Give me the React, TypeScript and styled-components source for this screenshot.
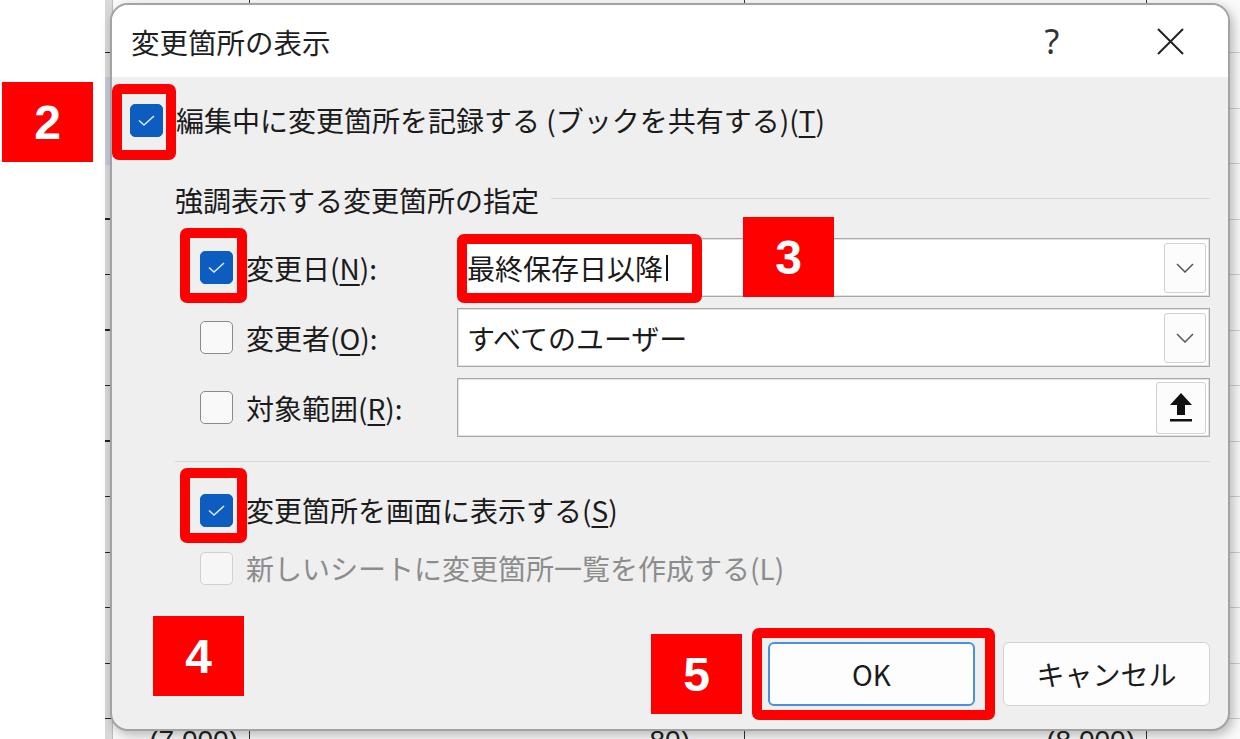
import React from "react";
import styled, { createGlobalStyle } from "styled-components";

const GlobalStyle = createGlobalStyle`
  html, body {
    margin: 0;
    padding: 0;
    background: #fff;
  }
  body {
    font-family: "Noto Sans CJK JP", "Noto Sans", sans-serif;
    color: #1b1b1b;
  }
`;

const Screen = styled.div`
  position: relative;
  width: 1240px;
  height: 739px;
  overflow: hidden;
  display: flex;
  background: #fff;
`;

const Gutter = styled.div`
  width: 105px;
  flex-shrink: 0;
`;

// spreadsheet peeking out behind the dialog
const Sheet = styled.div`
  flex: 1;
  display: flex;
  flex-direction: column;
  justify-content: flex-end;
  background:
    linear-gradient(to right, transparent 144px, #333 144px 145px, transparent 145px 639px,
      #333 639px 640px, transparent 640px 1041px, #333 1041px 1042px, transparent 1042px),
    repeating-linear-gradient(to bottom, transparent 0 54.5px, #cfcfcf 54.5px 55.5px),
    #fafafa;
  background-position: 0 0, 0 -2px, 0 0;
`;

const RowHeader = styled.div`
  position: absolute;
  left: 105px;
  top: 0;
  width: 7px;
  height: 739px;
  background:
    linear-gradient(to bottom, transparent 77px, #c3cad8 77px 165px, transparent 165px),
    repeating-linear-gradient(to bottom, transparent 0 54px, #222 54px 55.5px),
    #d9d9d9;
  background-position: 0 0, 0 -2px, 0 0;
  border-right: 1px solid #bdbdbd;
`;

const CellRow = styled.div`
  display: grid;
  grid-template-columns: 7px 138px 495px 402px 1fr;
  height: 34px;
  margin-bottom: -19px;
  font-family: "Liberation Sans", sans-serif;
  font-size: 28px;
  line-height: 34px;
  color: #222;
`;

const Cell = styled.div<{ $pad?: number }>`
  text-align: right;
  padding-right: ${(p) => p.$pad ?? 12}px;
  overflow: hidden;
  white-space: nowrap;
`;

const Dialog = styled.div`
  position: absolute;
  left: 110px;
  top: 3px;
  width: 1120px;
  height: 728px;
  box-sizing: border-box;
  border: 2px solid #a3a3a3;
  border-radius: 18px;
  background: #efefef;
  overflow: hidden;
  display: flex;
  flex-direction: column;
  box-shadow: 3px 4px 12px rgba(0, 0, 0, 0.28);
`;

const TitleBar = styled.div`
  height: 72px;
  flex-shrink: 0;
  background: #fff;
  display: flex;
  align-items: center;
  padding: 0 18px 0 19px;
`;

const Title = styled.div`
  flex: 1;
  font-size: 28.5px;
  color: #1f1f1f;
`;

const TitleButton = styled.div<{ $w: number }>`
  width: ${(p) => p.$w}px;
  height: 60px;
  display: flex;
  align-items: center;
  justify-content: center;
  font-family: "Noto Sans", sans-serif;
  font-size: 34px;
  color: #333;
`;

const Body = styled.div`
  flex: 1;
  display: flex;
  flex-direction: column;
  padding: 13px 18px 0 18px;
`;

const CheckRow = styled.div<{ $indent?: number; $mt?: number; $h?: number }>`
  display: flex;
  align-items: center;
  gap: 13px;
  height: ${(p) => p.$h ?? 50}px;
  margin-top: ${(p) => p.$mt ?? 0}px;
  padding-left: ${(p) => p.$indent ?? 0}px;
`;

const Label = styled.span<{ $disabled?: boolean }>`
  font-size: 28px;
  white-space: nowrap;
  color: ${(p) => (p.$disabled ? "#8c8c8c" : "#1b1b1b")};
  u {
    text-underline-offset: 4px;
    text-decoration-thickness: 1.5px;
  }
`;

const Box = styled.span<{ $checked?: boolean; $disabled?: boolean }>`
  width: 33px;
  height: 33px;
  flex-shrink: 0;
  box-sizing: border-box;
  border-radius: 5px;
  display: flex;
  align-items: center;
  justify-content: center;
  background: ${(p) => (p.$checked ? "#0c5dbf" : p.$disabled ? "#f6f6f6" : "#f9f9f9")};
  border: 1.5px solid
    ${(p) => (p.$checked ? "#0c5dbf" : p.$disabled ? "#d0d0d0" : "#8a8a8a")};
`;

const GroupHeader = styled.div`
  display: flex;
  align-items: center;
  gap: 12px;
  height: 40px;
  margin-top: 30px;
  padding-left: 45px;
`;

const Rule = styled.div`
  flex: 1;
  height: 1px;
  background: #d7d7d7;
  margin-top: -4px;
`;

const Fields = styled.div`
  display: grid;
  grid-template-columns: 257px 1fr;
  grid-auto-rows: 59px;
  row-gap: 11px;
  margin-top: 18px;
  padding-left: 70px;
`;

const FieldLabel = styled.div`
  display: flex;
  align-items: center;
  gap: 13px;
`;

const Input = styled.div`
  display: flex;
  align-items: center;
  box-sizing: border-box;
  background: #fff;
  border: 1px solid #a8a8a8;
  box-shadow: inset 0 0 0 1px #e2e2e2;
  padding-left: 9px;
  font-size: 28px;
  color: #1b1b1b;
`;

const InputText = styled.span`
  flex: 1;
  display: flex;
  align-items: center;
  white-space: nowrap;
`;

const Caret = styled.span`
  display: inline-block;
  width: 2px;
  height: 26px;
  margin-left: 3px;
  background: #111;
`;

const SideButton = styled.div<{ $w: number; $h: number }>`
  width: ${(p) => p.$w}px;
  height: ${(p) => p.$h}px;
  margin-right: 3px;
  box-sizing: border-box;
  border: 1px solid #d2d2d2;
  border-radius: 3px;
  background: #fcfcfc;
  display: flex;
  align-items: center;
  justify-content: center;
`;

const Separator = styled.div`
  height: 1px;
  background: #d7d7d7;
  margin: 24px 0 0 45px;
`;

const Footer = styled.div`
  display: flex;
  justify-content: flex-end;
  gap: 28px;
  margin-top: 49px;
`;

const Button = styled.div<{ $primary?: boolean }>`
  width: 207px;
  height: 64px;
  box-sizing: border-box;
  border-radius: 6px;
  background: #fdfdfd;
  border: ${(p) => (p.$primary ? "2px solid #4a90da" : "1px solid #d3d3d3")};
  display: flex;
  align-items: center;
  justify-content: center;
  font-size: 28px;
  color: #1b1b1b;
`;

// annotation overlays
const Badge = styled.div<{ $x: number; $y: number }>`
  position: absolute;
  left: ${(p) => p.$x}px;
  top: ${(p) => p.$y}px;
  width: 91px;
  height: 80px;
  background: #ff0000;
  color: #fff;
  display: flex;
  align-items: center;
  justify-content: center;
  font-family: "Liberation Sans", Arial, sans-serif;
  font-weight: 700;
  font-size: 48px;
`;

const Highlight = styled.div<{ $x: number; $y: number; $w: number; $h: number }>`
  position: absolute;
  left: ${(p) => p.$x}px;
  top: ${(p) => p.$y}px;
  width: ${(p) => p.$w}px;
  height: ${(p) => p.$h}px;
  box-sizing: border-box;
  border: 10px solid #ff0000;
  border-radius: 7px;
  pointer-events: none;
`;

const Check = ({ checked, disabled }: { checked?: boolean; disabled?: boolean }) => (
  <Box $checked={checked} $disabled={disabled}>
    {checked && (
      <svg width="19" height="13" viewBox="0 0 19 13">
        <path d="M2 6.5 L7 11 L17 2" fill="none" stroke="#dce8f7" strokeWidth="1.6" />
      </svg>
    )}
  </Box>
);

const Chevron = () => (
  <svg width="18" height="10" viewBox="0 0 18 10">
    <path d="M1 1 L9 9 L17 1" fill="none" stroke="#555" strokeWidth="1.5" />
  </svg>
);

const UploadArrow = () => (
  <svg width="24" height="32" viewBox="0 0 24 32">
    <path d="M12 1 L23 13 L16 13 L16 23 L8 23 L8 13 L1 13 Z" fill="#111" />
    <rect x="1" y="27" width="22" height="2.5" fill="#111" />
  </svg>
);

const App = () => {
  return (
    <>
      <GlobalStyle />
      <Screen>
        <Gutter />
        <Sheet>
          <CellRow>
            <Cell />
            <Cell>(7,000)</Cell>
            <Cell $pad={55}>80)</Cell>
            <Cell>(8,000)</Cell>
            <Cell />
          </CellRow>
        </Sheet>
        <RowHeader />

        <Dialog>
          <TitleBar>
            <Title>変更箇所の表示</Title>
            <TitleButton $w={60}>?</TitleButton>
            <TitleButton $w={48} />
            <TitleButton $w={80}>
              <svg width="27" height="27" viewBox="0 0 27 27">
                <path d="M1 1 L26 26 M26 1 L1 26" stroke="#222" strokeWidth="2" />
              </svg>
            </TitleButton>
          </TitleBar>

          <Body>
            <CheckRow $h={60}>
              <Check checked />
              <Label>
                編集中に変更箇所を記録する (ブックを共有する)(<u>T</u>)
              </Label>
            </CheckRow>

            <GroupHeader>
              <Label>強調表示する変更箇所の指定</Label>
              <Rule />
            </GroupHeader>

            <Fields>
              <FieldLabel>
                <Check checked />
                <Label>
                  変更日(<u>N</u>):
                </Label>
              </FieldLabel>
              <Input>
                <InputText>
                  最終保存日以降
                  <Caret />
                </InputText>
                <SideButton $w={42} $h={50}>
                  <Chevron />
                </SideButton>
              </Input>

              <FieldLabel>
                <Check />
                <Label>
                  変更者(<u>O</u>):
                </Label>
              </FieldLabel>
              <Input>
                <InputText>すべてのユーザー</InputText>
                <SideButton $w={42} $h={50}>
                  <Chevron />
                </SideButton>
              </Input>

              <FieldLabel>
                <Check />
                <Label>
                  対象範囲(<u>R</u>):
                </Label>
              </FieldLabel>
              <Input>
                <InputText />
                <SideButton $w={50} $h={52}>
                  <UploadArrow />
                </SideButton>
              </Input>
            </Fields>

            <Separator />

            <CheckRow $indent={70} $mt={23}>
              <Check checked />
              <Label>
                変更箇所を画面に表示する(<u>S</u>)
              </Label>
            </CheckRow>
            <CheckRow $indent={70} $mt={8}>
              <Check disabled />
              <Label $disabled>新しいシートに変更箇所一覧を作成する(L)</Label>
            </CheckRow>

            <Footer>
              <Button $primary>OK</Button>
              <Button>キャンセル</Button>
            </Footer>
          </Body>
        </Dialog>

        <Highlight $x={112} $y={84} $w={64} $h={76} />
        <Highlight $x={180} $y={228} $w={67} $h={75} />
        <Highlight $x={457} $y={234} $w={245} $h={69} />
        <Highlight $x={180} $y={468} $w={67} $h={75} />
        <Highlight $x={752} $y={628} $w={243} $h={92} />

        <Badge $x={2} $y={82}>2</Badge>
        <Badge $x={743} $y={217}>3</Badge>
        <Badge $x={153} $y={616}>4</Badge>
        <Badge $x={651} $y={634}>5</Badge>
      </Screen>
    </>
  );
};

export default App;
